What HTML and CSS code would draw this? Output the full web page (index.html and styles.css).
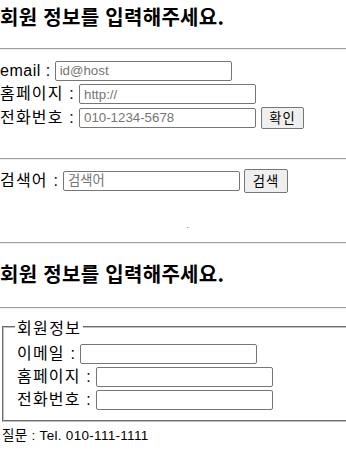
FILE: index.html
```html
<!DOCTYPE html>
<html lang="ko">
<head>
  <meta charset="UTF-8" />
  <title>회원 정보</title>
  <link rel="stylesheet" href="styles.css">
</head>
<body>
  <h3 class="title">회원 정보를 입력해주세요.</h3>
  <hr class="line line-top">

  <div class="row"><span class="en">email :</span><input type="text" placeholder="id@host"></div>
  <div class="row"><span>홈페이지 :</span><input type="text" placeholder="http://"></div>
  <div class="row"><span>전화번호 :</span><input type="text" placeholder="010-1234-5678"><button>확인</button></div>

  <hr class="line line-mid">

  <div class="row search"><span>검색어 :</span><input type="text" placeholder="검색어"><button>검색</button></div>

  <div class="dot-row"><a href="#">.</a></div>

  <hr class="line line-low">

  <h3 class="title title-two">회원 정보를 입력해주세요.</h3>
  <hr class="line line-last">

  <fieldset class="member">
    <legend>회원정보</legend>
    <div class="row"><span>이메일 :</span><input type="text"></div>
    <div class="row"><span>홈페이지 :</span><input type="text"></div>
    <div class="row"><span>전화번호 :</span><input type="text"></div>
  </fieldset>

  <p class="contact">질문 : Tel. 010-111-1111</p>
</body>
</html>
```

FILE: styles.css
```css
body {
  margin: 0;
  font-family: "Liberation Sans", "Noto Sans CJK KR", sans-serif;
  font-size: 16px;
  color: #000;
}

.title {
  margin: 4px 0 0;
  font-family: "Noto Sans CJK KR", sans-serif;
  font-size: 20px;
  line-height: 26px;
  letter-spacing: 0.3px;
  font-weight: bold;
}

.line {
  border: none;
  border-top: 1px solid #a0a0a0;
  border-bottom: 1px solid #eee;
  margin: 0;
}
.line-top { margin-top: 18px; margin-bottom: 9px; }
.line-mid { margin-top: 28px; margin-bottom: 8px; }
.line-low { margin-top: 0; }
.title-two { margin-top: 17px; }
.line-last { margin-top: 20px; margin-bottom: 8px; }

.row {
  display: flex;
  align-items: center;
  height: 23.5px;
  white-space: nowrap;
}
.row span {
  margin-right: 4px;
  line-height: 20px;
  letter-spacing: 1.2px;
}
.row span.en { letter-spacing: 0.5px; }

.row input {
  width: 177px;
  height: 20px;
  box-sizing: border-box;
  border: 1px solid #767676;
  border-radius: 2px;
  padding: 1px 4px;
  font-family: "Liberation Sans", "Noto Sans CJK KR", sans-serif;
  font-size: 13.3px;
}
.row input::placeholder { color: #757575; }

.row button {
  margin-left: 5px;
  width: 43px;
  height: 22px;
  padding: 0;
  border: 1px solid #767676;
  border-radius: 2px;
  background: #efefef;
  font-family: "Noto Sans CJK KR", sans-serif;
  font-size: 13.3px;
  line-height: 18px;
  letter-spacing: 1px;
}

.search { height: 26px; }
.search button { width: 44px; height: 24px; margin-left: 4px; }

.dot-row {
  height: 48px;
  box-sizing: border-box;
  padding: 28px 0 0 29px;
  text-align: center;
  font-size: 8px;
  line-height: 8px;
}
.dot-row a { color: #0000ff; text-decoration: none; }

.member {
  margin: 0 0 0 2px;
  padding: 6px 12px 8px 13px;
  border: 2px groove #c0c0c0;
  border-right: none;
}
.member legend {
  margin-left: -2px;
  padding: 0 2px;
  font-family: "Noto Sans CJK KR", sans-serif;
  line-height: 20px;
  letter-spacing: 1.4px;
}
.member .row { height: 23px; }

.contact {
  margin: 6px 0 0 2px;
  font-size: 13.5px;
  line-height: 16px;
  letter-spacing: 0.3px;
}
```
